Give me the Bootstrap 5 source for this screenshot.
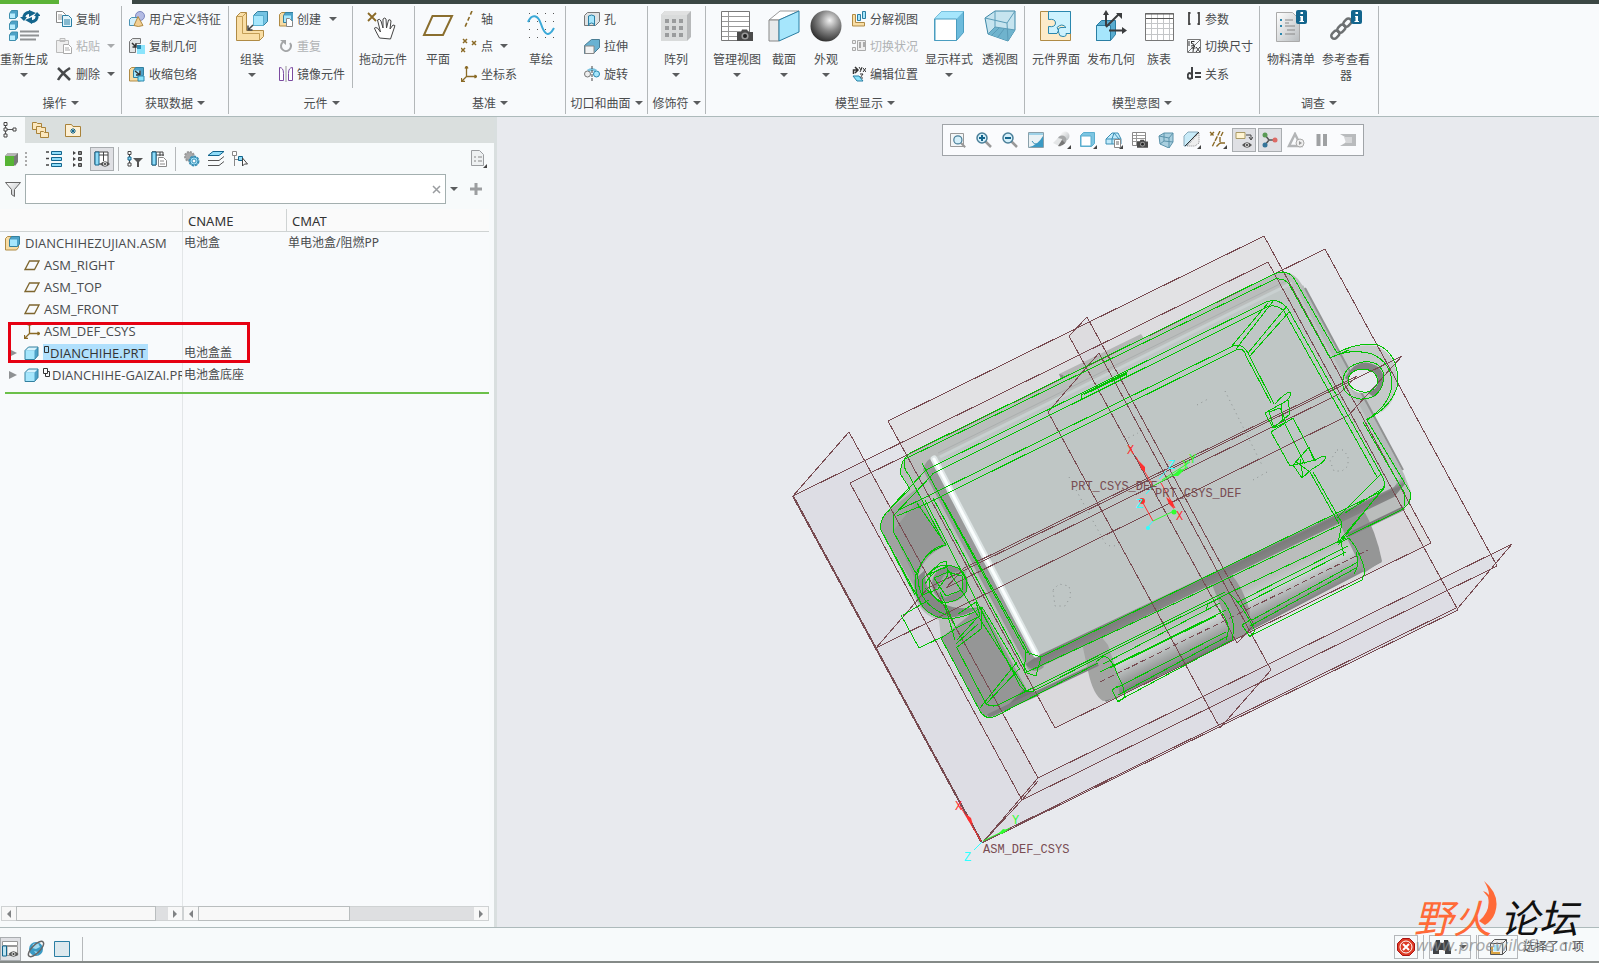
<!DOCTYPE html>
<html lang="zh-CN">
<head>
<meta charset="utf-8">
<meta name="viewport" content="width=device-width, initial-scale=1">
<title>DIANCHIHEZUJIAN.ASM</title>
<link href="https://cdn.jsdelivr.net/npm/bootstrap@5.3.0/dist/css/bootstrap.min.css" rel="stylesheet">
<style>
body{font-family:"Noto Sans","Noto Sans CJK SC",sans-serif;font-size:12px;line-height:16px;color:#4a4c4e;background:#f8fafc}
button{border:0;background:none;padding:0;color:inherit;font:inherit;line-height:16px}
svg{display:block;flex:none}
.titlestrip{height:4px;background:#3b4744}
.strip-file{width:59px;background:#5cb338}
.strip-tab{width:73px;background:#f8fafc}
.ribbon{background:#f8fafc;border-bottom:1px solid #adbabb;height:113px;font-family:"Noto Sans CJK SC",sans-serif}
.rgroup{border-right:1px solid #b3b7b9;margin:2px 0;white-space:nowrap}
.rbody{height:82px}
.rlabel{height:26px;padding-top:4px;gap:4px}
.bigbtn{display:flex;flex-direction:column;align-items:center;padding-top:4px;justify-content:flex-start}
.bigbtn span{margin-top:9px}
.bigbtn .caret{margin-top:6px}
.bw-l{width:62px}.bw-m{width:48px}.bw-n{width:46px}.bw-s{width:32px}.bw-x{width:40px}.bw-h{width:56px}
.smallbtn{display:flex;align-items:center;gap:4px;height:28px}
.smallbtn:first-child{height:26px}
.smallbtn .caret{margin-left:3px}
.caret{display:block;border:4px solid transparent;border-top-color:#5a5c5e;border-bottom:0;width:0;height:0;flex:none}
.dim{color:#b0b3b5}.dim .caret{border-top-color:#a8aaac}
.innersep{width:1px;background:#b3b7b9;margin:0 7px}
.g1{width:122px}.g2{width:107px}.g3{width:186px}.g4{width:151px}.g5{width:82px}.g6{width:58px}.g7{width:319px}.g8{width:235px}.g9{width:119px}
.smallpad{padding-left:7px}.cutpad{padding-left:18px}
.sidepane{width:497px;border-right:3px solid #d9dfdf;background:#f7fafb}
.tabrow{height:26px;background:#dadfde}
.tabbtn{height:26px;display:flex;align-items:center;justify-content:center;width:32px}
.tabbtn.active{background:#f7fafb;width:25px;padding-right:5px}
.treetools{height:31px;padding:0 4px}
.grip{margin:0 15px 0 7px}
.pressed{background:#dfe0e4;border:1px solid #a9adb0}
.tb24{width:24px;height:24px;display:flex;align-items:center;justify-content:center;flex:none}
.vsep{width:1px;height:24px;background:#b5b8ba;flex:none}
.treetools .vsep{margin:0 4px}
.filterrow{height:30px;padding-left:5px}
.filterbox{height:30px;border:1px solid #a3afaf;background:#fff;border-radius:0;width:421px}
.filterbox input{border:0;outline:0;background:none;min-width:0}
.treewrap{background:linear-gradient(#e3e6e8,#e3e6e8) 182px 0/1px 100% no-repeat,#f8fafc;margin-top:5px;margin-right:5px}
.tree{table-layout:fixed;width:100%;border-collapse:separate;border-spacing:0}
.tree th{font-weight:400;color:#333;height:23px;background:#fafafa;border-bottom:1px solid #cfd3d3;font-size:13px;padding:2px 0 0 5px}
.tree th+th{border-left:1px solid #cfd3d3}
.tree td{height:22px;padding:0;white-space:nowrap;overflow:hidden}
.tree td+td{padding-left:2px}
.tree .cell{display:flex;align-items:center;gap:4px;height:22px;font-family:"Open Sans","Noto Sans",sans-serif;font-size:13px}
.lv1{padding-left:24px}.lv0{padding-left:5px}.lvp{padding-left:9px}
.expander{border:4px solid transparent;border-left:8px solid #8f9193;border-right:0;width:8px;height:8px;flex:none;margin-right:2px}
.picked{background:#b0e0fd;color:#333;height:18px;display:flex;align-items:center;padding:0 2px 0 1px;gap:1px}
.childname{margin-left:-2px}
.redbox{position:absolute;left:8px;top:113px;width:242px;height:41px;border:3px solid #e60012;pointer-events:none}
.insertline{height:2px;background:#6cc04a;margin:6px 0 0 5px}
.sbars{margin:0 5px 6px 1px}
.sbar{height:15px;background:#dedfe1;border:1px solid #cfd2d3;display:flex;justify-content:space-between}
.sbar-name{width:182px}
.sbar button{width:14px;display:flex;align-items:center;justify-content:center;background:#f8f8f8}
.sthumb{background:#f8f8f8;border:1px solid #b9bdbe;margin:-1px 0}
.scene{background:#e8eaee}
.viewbar{position:absolute;left:445px;top:7px;background:#fafbfd;border:1px solid #a0a4a8;padding:3px 2px}
.viewbar .tb24{margin:0 1px}
.statusbar{height:34px;border-top:1px solid #adbabb;background:#f7fafb}
.navbtn{width:21px}.webbtn{width:30px}.fullbtn{width:22px;margin-right:9px}
.bottomedge{height:2px;background:#858a88}
.statusright{padding:0 15px 2px 0;gap:5px}
.boxed{border:1px solid #b4b7ba;height:24px;width:24px;display:flex;align-items:center;justify-content:center;gap:8px}
.boxed-find{width:42px}.boxed-filter{width:40px;margin-left:-4px}
.mark-logo{position:absolute;right:21px;bottom:7px;text-align:right;pointer-events:none}
.mark-big{font:italic 400 39px/40px "Noto Sans CJK SC",sans-serif;color:#111}
.mark-big b{font-weight:400;color:#ff6a38;margin-right:8px}
.mark-url{font:italic 16px/20px "DejaVu Sans",sans-serif;color:#8c8f92;opacity:.75}
.mark-flame{position:absolute;left:65px;top:-15px}
.scene text{font:12px "Liberation Mono",monospace;fill:#784c52}
</style>
</head>
<body class="vh-100 d-flex flex-column overflow-hidden">
<svg width="0" height="0" class="position-absolute" aria-hidden="true">
<defs>
<linearGradient id="sil" x1="0" y1="0" x2="1" y2="1"><stop offset="0" stop-color="#fff"/><stop offset="1" stop-color="#b8bcbf"/></linearGradient>
<radialGradient id="ball" cx=".62" cy=".32" r=".7"><stop offset="0" stop-color="#f2f2f2"/><stop offset=".5" stop-color="#858585"/><stop offset="1" stop-color="#303030"/></radialGradient>
<symbol id="cube" viewBox="0 0 16 16"><path d="M2 5.500l3.500-3.500h9.500v8.500l-3.500 4H2z" fill="#4da2c8"/><path d="M2 5.500l3.500-3.500h9.500l-3.500 3.500z" fill="#d8f3fd"/><path d="M2 5.500h9.500v9H2z" fill="#a6e6fc"/><path d="M2 5.500l3.500-3.500h9.500v8.500l-3.500 4H2z" fill="none" stroke="#33809f"/></symbol>
<symbol id="asm" viewBox="0 0 16 16"><path d="M.5 3.500l2-2h11v11l-2 2.500H.5z" fill="#f7dca4" stroke="#b08b45"/><path d="M4.500 4.500l2-3h8v7.500l-2 2.500h-8z" fill="#4da2c8" stroke="#33809f"/><path d="M5 4.500h7V11H5z" fill="#a6e6fc"/></symbol>
<symbol id="datum" viewBox="0 0 16 16"><path d="M5.500 4h9.500L10.500 12.500H1z" fill="none" stroke="#7e662f" stroke-width="1.300"/></symbol>
<symbol id="csys" viewBox="0 0 16 16"><path d="M5.500 0v10.500H16M5.500 10.500L1 15M4 2.500L5.500 0 7 2.500M13.500 9l2.500 1.500L13.500 12M.5 12v3.500H4" fill="none" stroke="#8a6a26" stroke-width="1.300"/></symbol>
<symbol id="cam" viewBox="0 0 16 12"><path d="M0 3h4l1-2.500h5L11.500 3H16v9H0z" fill="#4b4b4b"/><circle cx="8" cy="7" r="3.600" fill="#999"/><circle cx="8" cy="7" r="2" fill="#222"/></symbol>
<symbol id="sheet" viewBox="0 0 32 32"><path d="M2.500 1.500h28v29h-28z" fill="#fff" stroke="#777"/><path d="M3 6.500h27M3 11.500h27M3 16.500h27M3 21.500h27M3 26.500h27M9.500 2v28" stroke="#999"/></symbol>
<symbol id="eye" viewBox="0 0 10 6"><path d="M0 3Q5-2.500 10 3 5 8.500 0 3z" fill="#555"/><circle cx="5" cy="3" r="2" fill="#ddd"/><circle cx="5" cy="3" r="1" fill="#333"/></symbol>
<symbol id="info" viewBox="0 0 11 14"><rect width="11" height="14" rx="2" fill="#13658d"/><path d="M4.500 2h2.500v2H4.500zM4 6h3v5h1v1H3.500v-1h1V7H4z" fill="#fff"/></symbol>
<symbol id="mag" viewBox="0 0 16 16"><path d="M9.500 9.500L15 15" stroke="#999" stroke-width="2.500"/><circle cx="6" cy="6" r="5" fill="#d6f0fa" stroke="#4a7f99" stroke-width="1.500"/></symbol>
</defs></svg>

<header>
<div class="titlestrip d-flex"><div class="strip-file"></div><div class="strip-tab"></div></div>
<div class="ribbon d-flex">
 <section class="rgroup g1"><div class="rbody d-flex">
  <button class="bigbtn bw-m"><svg width="32" height="32"><g fill="#4da2c8" stroke="#3f8fae"><path d="M1.500 3.500l2-3h6v6l-2 2h-6zM1.500 14l2-3h6v6l-2 2.500h-6zM1.500 25l2-3h6v6l-2 2.500h-6z"/></g><path d="M2 3.500h5V8H2zM2 14.500h5V19H2zM2 25.500h5V30H2z" fill="#b8ecfd"/><path d="M16 9q-1-6 6-7M29 5q1 6-6 7" fill="none" stroke="#13658d" stroke-width="3"/><path d="M21 0l7 3-7 4zM24 7v7l-7-4zM12 7h7l-3 4zM26 6h7l-4-4z" fill="#13658d"/><path d="M12 21.500h19M12 25.500h19M12 29.500h16" stroke="#8f9294" stroke-width="2"/></svg><span>重新生成</span><i class="caret"></i></button>
  <div class="ms-2">
   <button class="smallbtn"><svg width="16" height="16"><path d="M.5.500h6l3 3v8h-9z" fill="#fff" stroke="#888"/><path d="M2 4h4M2 6h4M2 8h4" stroke="#999"/><path d="M6.500 4.500h6l3 3v8h-9z" fill="#e2f5fc" stroke="#2a7ea3"/><path d="M8 9h6M8 11h6M8 13h6" stroke="#2a7ea3"/></svg>复制</button>
   <button class="smallbtn dim" disabled><svg width="16" height="16"><path d="M.5 2.500h12v12H.5zM4 .5h5v3H4z" fill="#eee" stroke="#bbb"/><path d="M7.500 6.500h5l3 3v6h-8z" fill="#fff" stroke="#aaa"/><path d="M9 10h4M9 12h5" stroke="#aaa"/></svg>粘贴<i class="caret"></i></button>
   <button class="smallbtn"><svg width="16" height="16"><path d="M2 2l12 12M14 2Q6 7 2 14" stroke="#484a4c" stroke-width="2.500" fill="none"/></svg>删除<i class="caret"></i></button>
  </div></div><div class="rlabel d-flex justify-content-center align-items-center">操作<i class="caret"></i></div></section>
 <section class="rgroup g2"><div class="rbody smallpad">
   <button class="smallbtn"><svg width="16" height="16"><circle cx="11" cy="5" r="4.500" fill="#b3bbe4" stroke="#7d88bf"/><path d="M.5 8.500l2-2h6v5l-2 3h-6z" fill="#d2effb" stroke="#4a92b3"/><path d="M9 5.500l5 9q-5 2-9 0z" fill="#f2cf92" stroke="#b08b45"/></svg>用户定义特征</button>
   <button class="smallbtn"><svg width="16" height="16"><path d="M.5 3.500l3-3h8v5h-5v9h-6z" fill="#e3e5e6" stroke="#777"/><path d="M3 5l4 4M7 5.500V9H3.500" fill="none" stroke="#333" stroke-width="1.500"/><path d="M8 7h8v9H8z" fill="#8be4fc"/><path d="M8 7h4v4H8z" fill="#2a87ae"/></svg>复制几何</button>
   <button class="smallbtn"><svg width="16" height="16"><use href="#asm"/><path d="M6 5l5 4M11 4.500V9H7" fill="none" stroke="#333" stroke-width="1.500"/><path d="M9 10h6v5H9z" fill="#8be4fc" stroke="#2a87ae"/></svg>收缩包络</button>
 </div><div class="rlabel d-flex justify-content-center align-items-center">获取数据<i class="caret"></i></div></section>
 <section class="rgroup g3"><div class="rbody d-flex">
  <button class="bigbtn bw-n"><svg width="32" height="32"><path d="M.5 6.500l4-4h6v18h17v6l-4 4h-23z" fill="#f9dea6" stroke="#b08b45"/><path d="M.5 6.500h6v17h17v7M6.500 6.500l4-4" fill="none" stroke="#c39d55"/><path d="M17.500 5.500l4-4h10v10l-4 4h-10z" fill="#74c2e2" stroke="#33809f"/><path d="M17.500 5.500h10v10h-10z" fill="#a6e6fc" stroke="#5ab0d0"/><path d="M17 15l-5 5M12 15.500V20h4.500" fill="none" stroke="#444" stroke-width="1.500"/></svg><span>组装</span><i class="caret"></i></button>
  <div class="ps-1">
   <button class="smallbtn"><svg width="14" height="16"><use href="#asm" width="16" height="16"/><path d="M7.500 7.500h3l3 3v5h-6z" fill="#fff" stroke="#888"/></svg>创建<i class="caret ms-1"></i></button>
   <button class="smallbtn dim" disabled><svg width="14" height="16"><path d="M4 4a5 5 0 1 0 7 1" fill="none" stroke="#a3a5a7" stroke-width="2"/><path d="M1 2h6v5z" fill="#a3a5a7"/></svg>重复</button>
   <button class="smallbtn"><svg width="14" height="16"><path d="M.5 1.500q4 0 4 6v7h-4zM13.500 1.500q-4 0-4 6v7h4z" fill="#fff" stroke="#7b4ba0"/><path d="M7 0v16" stroke="#999"/></svg>镜像元件</button>
  </div>
  <div class="innersep"></div>
  <button class="bigbtn bw-n"><svg width="32" height="32"><path d="M1 3l8 8M9 3l-8 8" stroke="#8a6a26" stroke-width="1.800"/><path d="M12.500 28q-5-9-5-10t3 0l3 4-3-12q2-2 3.500 1l2 7V9q2-2 3 0l.5 9 2-8q2-1 2.500 1l-1 8 3-4q3 0 1.500 2l-4 12z" fill="#fff" stroke="#444"/></svg><span>拖动元件</span></button>
 </div><div class="rlabel d-flex justify-content-center align-items-center">元件<i class="caret"></i></div></section>
 <section class="rgroup g4"><div class="rbody d-flex">
  <button class="bigbtn bw-n"><svg width="32" height="32"><path d="M10.500 6h19.500L21 25H2z" fill="none" stroke="#8a6e2e" stroke-width="2"/></svg><span>平面</span></button>
  <div>
   <button class="smallbtn"><svg width="16" height="16"><path d="M11 0L4 16" stroke="#8a6a26" stroke-width="1.600" stroke-dasharray="4 2.500"/></svg>轴</button>
   <button class="smallbtn"><svg width="16" height="16"><path d="M2 1l4 4M6 1L2 5M11 3l4 4M15 3l-4 4M0 10l4 4M4 10l-4 4" stroke="#8a6a26" stroke-width="1.500"/></svg>点<i class="caret"></i></button>
   <button class="smallbtn"><svg width="16" height="16"><use href="#csys"/></svg>坐标系</button>
  </div>
  <button class="bigbtn bw-m"><svg width="32" height="32"><path d="M4 3.500h26M4 11.500h26M4 19.500h26M4 27.500h26" stroke="#555" stroke-dasharray="1 7"/><path d="M3 12C7 3 13 5 16 14s7 15 13 4" fill="none" stroke="#3aa9d8" stroke-width="2"/></svg><span>草绘</span></button>
 </div><div class="rlabel d-flex justify-content-center align-items-center">基准<i class="caret"></i></div></section>
 <section class="rgroup g5"><div class="rbody cutpad">
   <button class="smallbtn"><svg width="16" height="16"><path d="M.5 4.500l3-3h12v9l-4 4H.5z" fill="#dfe2e3" stroke="#777"/><path d="M4.500 15V5q3-2 6 0v10q0-3-3-3t-3 3z" fill="#a6e6fc" stroke="#2a7ea3"/></svg>孔</button>
   <button class="smallbtn"><svg width="16" height="16"><path d="M.5 7.500l7-6h8v8l-6 6h-9z" fill="#69b2d2" stroke="#4a7d94"/><path d="M1 8h9v7.500H1z" fill="#f3f3f3" stroke="#888"/></svg>拉伸</button>
   <button class="smallbtn"><svg width="16" height="16"><path d="M4 5q4-3 8 0" fill="none" stroke="#7ac3e0" stroke-width="3"/><circle cx="3.500" cy="8" r="3" fill="#eee" stroke="#777"/><circle cx="12.500" cy="8" r="3" fill="#a6e6fc" stroke="#2a87ae"/><path d="M8 0v16" stroke="#444" stroke-dasharray="3 1"/></svg>旋转</button>
 </div><div class="rlabel d-flex justify-content-center align-items-center">切口和曲面<i class="caret"></i></div></section>
 <section class="rgroup g6"><div class="rbody d-flex">
  <button class="bigbtn bw-h"><svg width="32" height="32"><path d="M1 5l4-4h26v26l-4 4H1z" fill="#b7b9ba"/><path d="M1 5l4-4h26l-4 4z" fill="#e0e1e1"/><path d="M1 5h26v26H1z" fill="#d9dbdb"/><path d="M5 9h4v4H5zM12 9h4v4h-4zM19 9h4v4h-4zM5 16h4v4H5zM12 16h4v4h-4zM19 16h4v4h-4zM5 23h4v4H5zM12 23h4v4h-4zM19 23h4v4h-4z" fill="#9a9c9d"/></svg><span>阵列</span><i class="caret"></i></button>
 </div><div class="rlabel d-flex justify-content-center align-items-center">修饰符<i class="caret"></i></div></section>
 <section class="rgroup g7"><div class="rbody d-flex">
  <button class="bigbtn bw-l"><svg width="32" height="32"><use href="#sheet" x="-2" width="32" height="32"/><use href="#cam" x="16" y="19" width="16" height="12"/></svg><span>管理视图</span><i class="caret"></i></button>
  <button class="bigbtn bw-s"><svg width="32" height="32"><path d="M1 10L12 1h19L11 10z" fill="#fff" stroke="#999"/><path d="M1 10h10v21H1z" fill="#e8eaeb" stroke="#888"/><path d="M11 10L31 1v21L11 31z" fill="#a6e6fc" stroke="#2a7ea3"/></svg><span>截面</span><i class="caret"></i></button>
  <button class="bigbtn bw-m ps-1"><svg width="32" height="32"><circle cx="16" cy="16" r="15.500" fill="url(#ball)"/></svg><span>外观</span><i class="caret"></i></button>
  <div class="ms-1">
   <button class="smallbtn"><svg width="14" height="16"><path d="M.5 3.500h3v8h9v3.500H.5z" fill="#f9dea6" stroke="#b08b45"/><path d="M5.500 3.500h3v6h-3zM10.500.500h3v7h-3z" fill="#a6e6fc" stroke="#2a7ea3"/></svg>分解视图</button>
   <button class="smallbtn dim" disabled><svg width="14" height="16"><path d="M.5 2.500h3v3h-3zM.5 9.500h3v3h-3zM5.500 2.500h8v10h-8z" fill="#eee" stroke="#aaa"/><path d="M7 4h2v6H7zM11 4h2v5h-2z" fill="#aaa"/></svg>切换状况</button>
   <button class="smallbtn"><svg width="14" height="16"><path d="M1.500 8V4h4M3 1l3 3-3 3" fill="none" stroke="#333" stroke-width="1.500"/><path d="M7 1l2 3 1-3M9 4l-1 2M11 2l3 4M14 2l-3 4M8 8h3l-3 4h3" fill="none" stroke="#333"/><path d="M1 10h6l4 5H5z" fill="#8be4fc" stroke="#2a7ea3"/></svg>编辑位置</button>
  </div>
  <button class="bigbtn bw-l"><svg width="32" height="32"><path d="M1.500 9l7-7.500h22v21l-7 8h-22z" fill="#6dbbdc" stroke="#4a9dc0"/><path d="M1.500 9l7-7.500h22l-7 7.500z" fill="#a6e6fc"/><path d="M2 9h21.500v21.500H2z" fill="#fff" stroke="#4a9dc0"/></svg><span>显示样式</span><i class="caret"></i></button>
  <button class="bigbtn bw-x"><svg width="32" height="32"><path d="M1 8L11 1h20v19L24 31 4 24z" fill="#c6e4ef" stroke="#3c87a6"/><path d="M4 24l7-7 20 3-7 11z" fill="#6fb3cd"/><path d="M1 8l22 5 1 18M23 13l8-12M11 1v16l-7 7M11 17l20 3M8 25l7-7M14 27l6-8" fill="none" stroke="#5b9cb8"/></svg><span>透视图</span></button>
 </div><div class="rlabel d-flex justify-content-center align-items-center">模型显示<i class="caret"></i></div></section>
 <section class="rgroup g8"><div class="rbody d-flex">
  <button class="bigbtn bw-l"><svg width="32" height="32"><path d="M.5 1.500h30v29H.5z" fill="#fdebc9" stroke="#b08b45"/><path d="M8.500 1.500h22v22H26q1 3-3 3t-4-3q-2-6 2-6 5 0 5 0-4-5-9 0 3 3 0 6H8.500v-7q7 1 7-3.500t-7-3.500z" fill="#cdf2fe" stroke="#2a87ae"/></svg><span>元件界面</span></button>
  <button class="bigbtn bw-m"><svg width="32" height="32"><path d="M1.500 15.500l5-5h14v14l-5 6h-14z" fill="#58acd0" stroke="#2a7ea3"/><path d="M1.500 15.500h14v15h-14z" fill="#a6e6fc" stroke="#2a7ea3"/><path d="M11 16V3M11 17L24 4M14 20.500h14" stroke="#3b3d3f" stroke-width="2"/><path d="M8 5h6l-3-5zM21 3h6v6zM27 17v7l5-3.500z" fill="#3b3d3f"/></svg><span>发布几何</span></button>
  <button class="bigbtn bw-m"><svg width="32" height="32"><path d="M2.500 3.500h28v27h-28z" fill="#fff" stroke="#777"/><path d="M3 13.500h27M3 18.500h27M3 24.500h27M8.500 4v26M14.500 4v26M20.500 4v26M26.500 4v26" stroke="#c4c6c8"/><path d="M2 4h29M3 8.500h27" stroke="#555"/></svg><span>族表</span></button>
  <div class="ps-1">
   <button class="smallbtn"><svg width="14" height="16"><path d="M3.500 2H2v11h1.500M10.500 2H12v11h-1.500" fill="none" stroke="#444" stroke-width="1.800"/></svg>参数</button>
   <button class="smallbtn"><svg width="14" height="16"><path d="M.5 1.500h13v13H.5zM13 2L1 14" fill="none" stroke="#777"/><path d="M2 3v5M4 3.500h3.500M4.500 3.500v2q3 0 2.500 2L4 8M8 8q-2 0-2 6M4.500 10h4M9 9l4 5M13 9l-4 5" fill="none" stroke="#333"/></svg>切换尺寸</button>
   <button class="smallbtn"><svg width="14" height="16"><path d="M5 1v12M5 8.500q-3-3-4 0t1 4 3-1.500M8 7h6M8 11h6" fill="none" stroke="#3f4143" stroke-width="2"/></svg>关系</button>
  </div>
 </div><div class="rlabel d-flex justify-content-center align-items-center">模型意图<i class="caret"></i></div></section>
 <section class="rgroup g9"><div class="rbody d-flex">
  <button class="bigbtn bw-l"><svg width="32" height="32"><path d="M1.500 2.500h16l7 7v22h-23z" fill="url(#sil)" stroke="#aaa"/><path d="M5 10h2M5 16h2M5 24h2" stroke="#2a87ae" stroke-width="2"/><path d="M10 10h8M10 13h4M10 16h10M12 20h8M10 24h10" stroke="#888"/><use href="#info" x="21" width="11" height="14"/></svg><span>物料清单</span></button>
  <button class="bigbtn bw-m text-wrap"><svg width="32" height="32"><g fill="none" stroke="#6d7072" stroke-width="2.500"><rect x="1" y="22" width="9" height="6" rx="3" transform="rotate(-45 5 25)"/><rect x="7" y="16" width="9" height="6" rx="3" transform="rotate(-45 11 19)"/><rect x="13" y="10" width="9" height="6" rx="3" transform="rotate(-45 17 13)"/></g><use href="#info" x="21" width="11" height="14"/></svg><span>参考查看器</span></button>
 </div><div class="rlabel d-flex justify-content-center align-items-center">调查<i class="caret"></i></div></section>
</div>
</header>

<main class="flex-grow-1 d-flex overflow-hidden">
<aside class="sidepane d-flex flex-column flex-shrink-0">
 <nav class="tabrow d-flex">
  <button class="tabbtn active" aria-label="模型树"><svg width="14" height="16"><path d="M2.500 2v12M3 7.500h8" stroke="#555"/><path d="M1 .5h3v3H1zM1 6h3v3H1zM1 12h3v3H1zM10 6h3v3h-3z" fill="#fff" stroke="#444"/></svg></button>
  <button class="tabbtn" aria-label="文件夹浏览器"><svg width="18" height="18"><g fill="#fbe7be" stroke="#a98239"><path d="M.5 1.500h4l1 1h4v6h-9z"/><path d="M4.500 5.500h4l1 1h4v6h-9z"/><path d="M8.500 10.500h3l1 1h4v5h-8z"/></g></svg></button>
  <button class="tabbtn" aria-label="收藏夹"><svg width="16" height="16"><path d="M.5 2.500h6l1.500 2h7.500v10H.5z" fill="#fdf0d4" stroke="#a98239"/><path d="M8 6v6M5 9h6M6 7l4 4M10 7l-4 4" stroke="#13658d"/></svg></button>
 </nav>
 <div class="treetools d-flex align-items-center">
  <svg width="14" height="14"><path d="M1 4l3-3h10v9l-3 4z" fill="#777"/><path d="M1 4l3-3h10l-3 3z" fill="#b5b5b5"/><path d="M1 4h9v10H1z" fill="#57b435"/></svg>
  <svg width="2" height="14" class="grip"><path d="M1 0v14" stroke="#aaa" stroke-width="2" stroke-dasharray="2 2"/></svg>
  <button class="tb24" aria-label="全部展开"><svg width="16" height="16"><path d="M0 1h3M0 7.500h3M0 14h3" stroke="#444" stroke-width="1.500"/><path d="M5.500.5h10v3h-10zM5.500 6.500h10v3h-10zM5.500 12.500h10v3h-10z" fill="#8fdcf8" stroke="#13658d"/></svg></button>
  <button class="tb24" aria-label="全部折叠"><svg width="12" height="16"><path d="M1 0l3 2-3 2zM1 6l3 2-3 2zM1 12l3 2-3 2z" fill="#444"/><path d="M6.500.5h3v3h-3zM6.500 6.500h3v3h-3zM6.500 12.500h3v3h-3z" fill="#888" stroke="#444"/></svg></button>
  <button class="tb24 pressed" aria-label="树列"><svg width="16" height="16"><path d="M1 1h13v12H1z" fill="#fff" stroke="#444"/><path d="M1 1h4v13H1z" fill="#8fdcf8" stroke="#13658d"/><path d="M5 4h9M9.500 1v9" stroke="#444"/><use href="#eye" x="6" y="10" width="10" height="6"/></svg></button>
  <i class="vsep"></i>
  <button class="tb24" aria-label="树过滤器"><svg width="16" height="16"><path d="M2.500 2v12" stroke="#444"/><path d="M1 .5h3v3H1zM1 12h3v3H1z" fill="#fff" stroke="#444"/><path d="M1 6h3v3H1z" fill="#8fdcf8" stroke="#13658d"/><path d="M6 7h10l-4 4v5h-2v-5z" fill="#555"/></svg></button>
  <button class="tb24" aria-label="树设置"><svg width="16" height="16"><path d="M1 1h11v4M1 1h4v13H1zM5 4h8M9 1v4" fill="none" stroke="#444"/><path d="M1 1h4v13H1z" fill="#8fdcf8" stroke="#13658d"/><path d="M7.500 6.500h5l3 3v6h-8z" fill="#fff" stroke="#888"/><path d="M9 10h4M9 13h5" stroke="#888"/></svg></button>
  <i class="vsep"></i>
  <button class="tb24" aria-label="设置"><svg width="16" height="16"><circle cx="5.500" cy="5.500" r="4.500" fill="#aaa" stroke="#999" stroke-width="2" stroke-dasharray="2 1"/><circle cx="10" cy="10" r="4" fill="#e8f7fd" stroke="#3a8fb5" stroke-width="3" stroke-dasharray="2.200 .8"/><circle cx="10" cy="10" r="4" fill="#a6e6fc" stroke="#3a8fb5"/><circle cx="10" cy="10" r="2" fill="#fff" stroke="#3a8fb5"/></svg></button>
  <button class="tb24" aria-label="层"><svg width="18" height="16"><path d="M6 .5h11l-5 4H1z" fill="#8fdcf8" stroke="#13658d"/><path d="M1 9.500h11l5-4M1 14.500h11l5-4" fill="none" stroke="#555"/></svg></button>
  <button class="tb24" aria-label="选择"><svg width="16" height="16"><path d="M2.500 4v11M3 8.500h4" stroke="#888"/><path d="M.5.500h4v4h-4z" fill="#fff" stroke="#888"/><path d="M6.500 5.500h4v4h-4z" fill="#8fdcf8" stroke="#13658d"/><path d="M10.500 7v8l2-2h3z" fill="#fff" stroke="#444"/></svg></button>
  <button class="tb24 ms-auto" aria-label="显示"><svg width="17" height="18"><path d="M1.500.500h8l4 4v11h-12z" fill="#eef1f2" stroke="#9a9da0"/><path d="M4 7h2M4 11h2M8 7h4M8 11h4" stroke="#888"/><path d="M17 14v4h-4z" fill="#444"/></svg></button>
 </div>
 <div class="filterrow d-flex align-items-center">
  <svg width="16" height="16" class="me-1"><path d="M.5 1.500h15l-6 7v7l-3-2v-5z" fill="url(#sil)" stroke="#666"/></svg>
  <div class="filterbox d-flex align-items-center pe-1"><input type="text" class="flex-grow-1" aria-label="过滤器"><button aria-label="清除"><svg width="9" height="9"><path d="M1 1l7 7M8 1L1 8" stroke="#9a9da0" stroke-width="1.500"/></svg></button></div>
  <button aria-label="过滤选项" class="ms-1"><i class="caret"></i></button>
  <button aria-label="添加" class="ms-2 ps-1"><svg width="12" height="12"><path d="M6 0v12M0 6h12" stroke="#9c9ea0" stroke-width="3"/></svg></button>
 </div>
 <div class="treewrap flex-grow-1 position-relative">
  <table class="tree">
   <colgroup><col style="width:182px"><col style="width:104px"><col></colgroup>
   <thead><tr><th></th><th>CNAME</th><th>CMAT</th></tr></thead>
   <tbody>
    <tr><td><div class="cell lv0"><svg width="16" height="16"><use href="#asm"/></svg>DIANCHIHEZUJIAN.ASM</div></td><td>电池盒</td><td>单电池盒/阻燃PP</td></tr>
    <tr><td><div class="cell lv1"><svg width="16" height="16"><use href="#datum"/></svg>ASM_RIGHT</div></td><td></td><td></td></tr>
    <tr><td><div class="cell lv1"><svg width="16" height="16"><use href="#datum"/></svg>ASM_TOP</div></td><td></td><td></td></tr>
    <tr><td><div class="cell lv1"><svg width="16" height="16"><use href="#datum"/></svg>ASM_FRONT</div></td><td></td><td></td></tr>
    <tr><td><div class="cell lv1"><svg width="16" height="16"><use href="#csys"/></svg>ASM_DEF_CSYS</div></td><td></td><td></td></tr>
    <tr><td><div class="cell lvp"><i class="expander"></i><svg width="16" height="16"><use href="#cube"/></svg><span class="picked"><svg width="5" height="14"><path d="M.5.5h4v6h-4z" fill="none" stroke="#333"/></svg>DIANCHIHE.PRT</span></div></td><td>电池盒盖</td><td></td></tr>
    <tr><td><div class="cell lvp"><i class="expander"></i><svg width="16" height="16"><use href="#cube"/></svg><svg width="7" height="14"><path d="M.5.500h4v5h-4zM4.500 3.500h2v5h-4v-3" fill="none" stroke="#333"/></svg><span class="childname">DIANCHIHE-GAIZAI.PRT</span></div></td><td>电池盒底座</td><td></td></tr>
   </tbody>
  </table>
  <div class="insertline"></div>
  <div class="redbox"></div>
 </div>
 <div class="sbars d-flex">
  <div class="sbar sbar-name"><button aria-label="左"><svg width="6" height="8"><path d="M5 0v8L1 4z" fill="#808284"/></svg></button><div class="sthumb flex-grow-1 me-2"></div><button class="ms-1" aria-label="右"><svg width="6" height="8"><path d="M1 0v8l4-4z" fill="#808284"/></svg></button></div>
  <div class="sbar flex-grow-1"><button aria-label="左"><svg width="6" height="8"><path d="M5 0v8L1 4z" fill="#808284"/></svg></button><div class="sthumb w-50 me-auto"></div><button aria-label="右"><svg width="6" height="8"><path d="M1 0v8l4-4z" fill="#808284"/></svg></button></div>
 </div>
</aside>

<section class="scene flex-grow-1 position-relative overflow-hidden">
<svg class="w-100 h-100" viewBox="497 117 1102 810" preserveAspectRatio="xMinYMin meet" fill="none">
 <defs>
  <linearGradient id="cyl" gradientUnits="userSpaceOnUse" x1="1150" y1="632" x2="1174" y2="681"><stop offset="0" stop-color="#b5b8b7"/><stop offset=".3" stop-color="#ccd1d1"/><stop offset=".55" stop-color="#a3a6a6"/><stop offset=".85" stop-color="#737373"/><stop offset="1" stop-color="#858585"/></linearGradient>
  <linearGradient id="rim" gradientUnits="userSpaceOnUse" x1="1210" y1="566" x2="1218" y2="583"><stop offset="0" stop-color="#bcc2c2"/><stop offset=".5" stop-color="#7c7c7c"/><stop offset="1" stop-color="#888"/></linearGradient>
 </defs>
 <!-- datum plane tints -->
 <g fill="#a08ea4" fill-opacity=".07">
  <path d="M793 496L1268 262 1458 610 982 843z"/><path d="M850 483L1325 249 1497 566 1022 800z" fill-opacity=".04"/>
  <path d="M793 496L849 432 1037 778 982 843z"/><path d="M982 843L1037 778 1512 544 1458 610z"/>
  <path d="M888 421L1264 236 1431 543 1055 728z" fill="#a08870" fill-opacity=".08"/>
  <path d="M1048 412L1099 353 1271 670 1220 728zM1069 336L1087 317 1254 625 1237 643z"/>
 </g>
 <!-- shaded parts -->
 <path d="M1059 374L1141 334 1150 347 1067 390z" fill="#b5b6b6"/><path d="M1059 374l4 1 5 12-2 3z" fill="#8c8c8c"/>
 <path d="M1335 354q20-11 41-8 22 8 21 38-2 18-14 27l-17 8z" fill="#c5c9c9"/>
 <path d="M910 453L1274 274q14-6 24 5l7 10 99 185 7 18q1 12-12 19L1000 713q-14 8-20-2L941 638l-2-18q-16-4-23-20L881 530q-2-10 7-19l22-22-9-14q-2-12 9-22z" fill="#babdbc"/>
 <path d="M1092 666L1340 540 1352 526 1382 562 1244 634 1234 640 1106 702q-10-10-14-36z" fill="url(#cyl)"/>
 <path d="M1082 643l18-8 8 10 8 24 4 28-17 4q-10-6-15-30z" fill="#a3a4a3"/>
 <path d="M1338 520l24-13q14 24 20 54l-18 12z" fill="#959696"/>
 <path d="M1211 582l18-10q14 14 21 40l-2 22-14 6z" fill="#979897"/>
 <path d="M1303 285L1404 475q3 10-10 16l-10 4-93-188z" fill="#b5baba"/><path d="M1305 288L1403 470" stroke="#8f9191" stroke-width="2"/>
 <path d="M881 530q-2-10 7-19l28-22 31 56q-24 10-29 28-3 10 0 20z" fill="#a1a2a2"/>
 <path d="M893 531l24-30 30 44q-22 9-28 28l-3 8z" fill="#959696"/>
 <path d="M941 638l40-32 45 82-28 27q-12 5-18-4z" fill="#959696"/><path d="M1000 713L1024 689 1040 695z" fill="#777"/>
 <path d="M988 716L1098 664" stroke="#7f8080" stroke-width="4"/><path d="M1348 535l56-27" stroke="#7c7c7c" stroke-width="4"/>
 <path d="M914 580q0 34 30 38 20 0 36-11-24 4-38-4-18-10-17-33z" fill="#858686"/>
 <circle cx="950" cy="584" r="18" fill="#8a8b8b"/><path d="M935 590l10-16 22-4-6 20-16 8z" fill="#a2a5a5"/>
 <path d="M935 457q-10 2-12 13l105 199q8 5 16-2l-10-12z" fill="#989999"/>
 <path d="M936 457L1288 283 1298 292 1399 478 1394 488 1040 655 1034 652 934 463z" fill="#bfc6c5"/>
 <path d="M940 457L1292 283" stroke="#c9d0d0" stroke-width="3"/><path d="M938 453L1290 279" stroke="#abafaf" stroke-width="1"/>
 <path d="M1037 656L1394 487 1404 474 1405 484 1394 497 1036 669q-8 0-10-5z" fill="url(#rim)"/>
 <path d="M934 459L1036 654" stroke="#dfe6e6" stroke-width="7" stroke-linecap="round"/><path d="M934 459L1036 654" stroke="#fafefe" stroke-width="3" stroke-linecap="round"/>
 <path d="M1345 378q10-18 24-15 14 3 15 17-2 10-10 17z" fill="#828383"/><ellipse cx="1363" cy="381" rx="15" ry="12" fill="#e6e8ec"/>

 <!-- datum plane outlines -->
 <g stroke="#784c52" shape-rendering="crispEdges">
  <path d="M793 496L1268 262 1458 610 982 843zM984 841L1456 608"/><path d="M793 496L982 843" stroke-width="2"/>
  <path d="M850 483L1325 249 1497 566 1022 800z"/>
  <path d="M793 496L849 432 1038 778 983 842M1038 778L1512 544 1458 608M1038 781L1022 800 985 840"/>
  <path d="M888 421L1264 236 1431 543 1055 728z"/>
  <path d="M1048 412L1099 353 1271 670 1220 728zM1069 336L1087 317 1254 625 1237 643z"/>
  <path d="M876 648L928 588 1402 356 1349 415zM964 568L1357 376 1339 394 946 588z"/>
  <path d="M1100 682L1368 550" stroke-dasharray="6 3"/>
 </g>
 <g stroke="#8b9090" stroke-dasharray="1 4"><path d="M1197 405l11-6M1225 391l38 76M1253 480l14-8M1124 440l14-7M1069 477l36 66q6 6 16 0M1337 450l6 0 5 6 0 10-6 5-8 0-4-10zM1053 590l6-6 10 2 2 10-6 10-10 0z"/></g>

 <!-- selected part edges -->
 <g stroke="#00c400" shape-rendering="crispEdges">
  <path d="M910 453L1274 274q14-6 21 6L1337 353M905 459L1275 279q9-1 14 5L1330 358 1349 350M910 453q-11 9-9 22l9 14-22 22q-9 9-7 19L915 595M905 459q-3 8 4 16l33 64"/>
  <path d="M926 470L1262 304q15-9 26 5L1381 474q8 14-3 19L1041 657 1026 652 922 463M932 474L1263 309q12-7 21 2L1377 477M926 470L893 505 888 512M933 474L893 516 893 531"/>
  <path d="M926 497L1231 347q11-6 18 8L1274 404M928 503L1236 350q8-3 10 6L1271 403M926 497L899 510M928 503L897 516M1313 472L1342 523 1338 543M1310 472L1339 524"/>
  <path d="M1231 347L1268 303M1236 349L1274 300M1248 353L1287 306M1249 357L1290 311"/>
  <path d="M1265 413l23-13 2 14-17 14zM1275 404q10-12 16-12 0 6-8 11M1269 412l11-4 6 14-12 6zM1281 404l2 17M1271 432l22-14 22 42-25 6zM1283 420l22 44M1293 465l16-18 5 14q10-7 12-4-2 6-14 12l-10 9zM1296 462l14 10M1300 459l3 18"/>
  <path d="M1337 353q20-11 41-8 20 8 20 38-4 22-31 37M1332 357q20-9 40-3 20 9 20 30-2 22-26 36M1343 386q-2-20 20-24 18-2 21 14-2 24-24 23-15-3-17-13zM1348 382q0-12 15-13 14 1 15 13-5 12-15 10-12-2-15-10z"/>
  <path d="M1367 420L1410 492q3 12-11 19L1346 537M1363 422L1405 494 1404 506M1381 474L1337 518M1385 487L1340 540M1385 487L1345 513M1380 492L1338 545"/>
  <path d="M881 530L923 607M893 531L918 577M917 503L946 545q-24 8-28 28-2 30 28 42M925 500L1020 686M933 498L1027 672M943 500L1030 655M946 545q-20 2-31 32 0 40 34 42 20-2 33-12L1020 670"/>
  <path d="M903 615L929 600M901 615L919 648 946 635M941 638L980 711q6 10 16 5L1098 663M941 638l14-9M957 648L986 704q8 4 14 0L1098 656M956 648L981 629 981 607M986 704L1020 668M980 708L1017 662M1020 686q8 10 17 3M1026 652L1024 672 1036 676 1041 657"/>
  <path d="M1027 672L1180 601 1342 524M1037 689L1100 657 1229 593 1346 538M1037 686L1225 592"/>
  <path d="M922 580l18-17 6-2 2 14-10 14-16 6zM934 578l14-6 14 4 0 14-16 6zM932 571q10-10 26-3 12 8 8 24-12 14-28 9-14-12-6-30zM925 588l20 18 10 34M940 592l16 36 24-12-4-14-18 12M956 644l22-20"/>
  <path d="M925 584q10-16 20-16M948 570L1026 690M928 575l22-10M957 640l20-22"/>
  <path d="M1096 662l8-6q8 2 14 20 8 14 6 22l-6 4-6-12 6-4M1100 672L1226 610M1110 668L1216 616M1118 701L1232 640 1234 628q-4-22-14-30l-12 6-2 6M1116 688L1226 632M1118 695L1228 636M1103 664L1220 603M1218 608q12 14 10 24l-2 8"/>
  <path d="M1229 593q14 12 26 38l-5 6-8-12 10-6M1250 636L1362 580 1365 572q-4-20-16-34l-8 4 3 14M1238 602L1348 546M1240 606L1346 552M1250 626L1356 568M1252 620L1358 562M1356 552q4 14-2 22"/>
  <path d="M1081 395L1127 372 1126 377 1081 400z"/><path d="M1084 394L1126 374" stroke-width="2"/>
 </g>

 <!-- coordinate systems -->
 <path d="M1136 457L1153 486M1161 483L1175 508M1143 503L1153 521M960 806L981 841" stroke="#ff3030"/>
 <path d="M1139 461l6 6 0 5-4-3zM1166 497l7 5 1 7-5-5zM966 814l5 4 2 7-5-5z" fill="#ff3030"/>
 <circle cx="1142" cy="501" r="3" fill="#ff3030"/>
 <path d="M1153 486L1188 467M1162 480L1190 462M1153 521L1174 511M983 841L1010 828" stroke="#30ff30"/>
 <path d="M1172 476l8-7 4 1-6 6zM998 834l5-5 5 1-6 4z" fill="#30ff30"/><circle cx="1174" cy="512" r="2.500" fill="#30ff30"/>
 <path d="M1153 486l-7 8M1159 479l7-8M1153 521l-5 6M982 842l-8 8" stroke="#30ffff"/><circle cx="1148" cy="528" r="2" fill="#30ffff"/>
 <text x="1071" y="490">PRT_CSYS_DEF</text><text x="1155" y="497">PRT_CSYS_DEF</text><text x="983" y="853">ASM_DEF_CSYS</text>
 <text x="1127" y="454" style="fill:#ff3030">X</text><text x="1176" y="520" style="fill:#ff3030">X</text><text x="955" y="810" style="fill:#ff3030">X</text>
 <text x="1182" y="469" style="fill:#30ff30">Y</text><text x="1189" y="463" style="fill:#30ff30">Y</text><text x="1012" y="824" style="fill:#30ff30">Y</text>
 <text x="1168" y="469" style="fill:#30ffff">Z</text><text x="1136" y="508" style="fill:#30ffff">Z</text><text x="964" y="861" style="fill:#30ffff">Z</text>
</svg>
<div class="viewbar d-flex" role="toolbar" aria-label="图形工具栏">
 <button class="tb24" aria-label="重新调整"><svg width="16" height="16"><path d="M.5 1.500h13v13H.5z" fill="#f4f6f7" stroke="#999"/><use href="#mag" x="3" y="3" width="13" height="13"/></svg></button>
 <button class="tb24" aria-label="放大"><svg width="16" height="16"><use href="#mag"/><path d="M3 6h6M6 3v6" stroke="#13658d" stroke-width="2"/></svg></button>
 <button class="tb24" aria-label="缩小"><svg width="16" height="16"><use href="#mag"/><path d="M3 6h6" stroke="#13658d" stroke-width="2"/></svg></button>
 <button class="tb24" aria-label="重画"><svg width="16" height="16"><path d="M.5.500h15v15H.5z" fill="#eaf2f5" stroke="#8aa0aa"/><path d="M1 1h14v2H1z" fill="#9ed2e8"/><path d="M1 15q9-2 14-11v11z" fill="#3a9ac4"/><path d="M4 9q2 4 5 3" stroke="#3a8fb5" fill="none"/></svg></button>
 <button class="tb24" aria-label="渲染"><svg width="18" height="18"><circle cx="12" cy="5" r="4.500" fill="url(#sil)"/><circle cx="9" cy="9" r="4.500" fill="#a5a7a8"/><path d="M0 12l5-5 4 1-1 8z" fill="#e4e6e7"/><path d="M5 15l4-6 3 3q-3 4-7 3z" fill="#777"/><path d="M18 14v4h-4z" fill="#444"/></svg></button>
 <button class="tb24" aria-label="显示样式"><svg width="18" height="18"><path d="M1.500 4.500l3-3h11v11l-3 3h-11z" fill="#7cc5e2" stroke="#5aaecf"/><path d="M2 5h10v10H2z" fill="#fff" stroke="#5aaecf"/><path d="M18 14v4h-4z" fill="#444"/></svg></button>
 <button class="tb24" aria-label="已保存方向"><svg width="18" height="18"><path d="M1 8l6-6h6l3 6v5H1z" fill="#c2eafa" stroke="#3a8fb5"/><path d="M1 8h15M9 2L7 8v5M9 2l5 6" stroke="#3a8fb5" fill="none"/><path d="M9.500 8.500h6v8h-6z" fill="#fff" stroke="#888"/><path d="M11 11h3M11 13h3" stroke="#666"/><path d="M18 14v4h-4z" fill="#444"/></svg></button>
 <button class="tb24" aria-label="视图管理器"><svg width="16" height="16"><path d="M.5.500h13v13H.5z" fill="#fff" stroke="#888"/><path d="M1 3.500h12M1 6.500h12M1 9.500h12M4.500 1v12" stroke="#999"/><use href="#cam" x="5" y="7" width="11" height="9"/></svg></button>
 <button class="tb24" aria-label="透视图"><svg width="16" height="16"><path d="M1 4l5-3h9v9l-4 6-9-4z" fill="#a9cfdf" stroke="#5b93ab"/><path d="M1 4l10 2v10M11 6l4-5M6 1v8l-4 3M6 9l9 1" fill="none" stroke="#5b93ab"/></svg></button>
 <button class="tb24" aria-label="截面"><svg width="18" height="18"><path d="M1 5l4-4h10L3 15H1z" fill="#c9ebf8" stroke="#8ab"/><path d="M4 15L16 2v10l-4 3z" fill="#eee" stroke="#888" stroke-dasharray="1 1"/><path d="M2 15L16 1" stroke="#333"/><path d="M18 14v4h-4z" fill="#444"/></svg></button>
 <button class="tb24" aria-label="基准显示过滤器"><svg width="18" height="18"><path d="M1 1l4 4M5 1L1 5M11 0L3 16M11 6v6h6M11 12l-4 4M14 1l-2 4" stroke="#8a6a26" stroke-width="1.400" fill="none" stroke-dasharray="5 1"/><path d="M18 14v4h-4z" fill="#444"/></svg></button>
 <button class="tb24 pressed" aria-label="注释显示"><svg width="18" height="16"><path d="M1 .5h9v6H1z" fill="#fff4d2" stroke="#aa9a66"/><path d="M11 3h5v4M14 5l2 3 2-3" stroke="#444" fill="none"/><use href="#eye" x="7" y="10" width="10" height="6"/></svg></button>
 <button class="tb24 pressed" aria-label="旋转中心"><svg width="16" height="16"><path d="M7 8h6M7 8L3 3M7 8l-4 5" stroke="#555" stroke-width="1.500"/><circle cx="3" cy="3" r="2.500" fill="#5a9a55"/><circle cx="13" cy="8" r="2.500" fill="#dd6a64"/><circle cx="3" cy="13" r="2.500" fill="#36759a"/></svg></button>
 <button class="tb24" aria-label="仿真" disabled><svg width="18" height="16"><path d="M8 2l6 12H2z" fill="none" stroke="#b3b5b7" stroke-width="2.500"/><circle cx="13" cy="11" r="4" fill="#eee" stroke="#aaa"/><path d="M12 9l3 2-3 2z" fill="#999"/></svg></button>
 <button class="tb24" aria-label="暂停" disabled><svg width="12" height="12"><path d="M2.500 0v12M9 0v12" stroke="#9fa1a3" stroke-width="4"/></svg></button>
 <button class="tb24" aria-label="恢复" disabled><svg width="16" height="12"><path d="M0 0h16v12H0l5-3q4-3 0-6z" fill="#b9bbbd"/><path d="M4 3h8v6H6" fill="#d5d6d8"/></svg></button>
</div>
</section>
</main>

<footer class="position-relative">
<div class="statusbar d-flex align-items-end">
 <button class="tb24 pressed navbtn" aria-label="导航器"><svg width="17" height="17"><path d="M.5.500h15v4H.5z" fill="#fff" stroke="#999"/><path d="M5 5.500h10.500v9H5z" fill="#f5f5f5" stroke="#999"/><path d="M.5 5h4v10h-4z" fill="#bfe3f0" stroke="#13658d"/><use href="#eye" x="6" y="10" width="11" height="6"/></svg></button>
 <button class="tb24 webbtn" aria-label="浏览器"><svg width="18" height="18"><circle cx="9" cy="9" r="7" fill="#3a9ac4"/><path d="M6 4l5-1 2 4-4 2-4-1zM7 11l4 1-1 3z" fill="#9fdaf0"/><ellipse cx="9" cy="9" rx="10" ry="4" transform="rotate(-45 9 9)" fill="none" stroke="#666" stroke-width="1.500"/></svg></button>
 <button class="tb24 fullbtn" aria-label="全屏"><svg width="16" height="16"><path d="M.5.500h15v15H.5z" fill="#dde9ee" stroke="#2a7ea3"/></svg></button>
 <i class="vsep"></i>
 <div class="ms-auto d-flex align-items-center statusright">
  <button class="boxed" aria-label="停止"><svg width="18" height="18"><path d="M5.500.500h7l5 5v7l-5 5h-7l-5-5v-7z" fill="#dd3b25" stroke="#a11"/><circle cx="9" cy="9" r="6" fill="none" stroke="#fff"/><path d="M6 6l6 6M12 6l-6 6" stroke="#fff" stroke-width="2"/></svg></button>
  <i class="vsep"></i>
  <button class="boxed boxed-find" aria-label="查找"><svg width="18" height="16"><path d="M3 1h4v3h4V1h4l3 9v5h-6v-4H6v4H0v-5z" fill="#3f4245"/></svg><i class="caret"></i></button>
  <i class="vsep"></i>
  <button class="boxed boxed-filter" aria-label="选择过滤器"><svg width="18" height="18"><path d="M1.500 5.500l4-4h12v11l-4 4h-12z" fill="#eee" stroke="#555"/><path d="M1.500 5.500h12v11M13.500 5.500l4-4" fill="none" stroke="#555"/><path d="M5 7h5v6H5z" fill="#a6e6fc"/><path d="M3 9v6h8" fill="none" stroke="#d9a441" stroke-width="2"/></svg></button>
  <span>选择了 1 项</span>
 </div>
</div>
<div class="bottomedge"></div>
<div class="mark-logo"><div class="mark-big"><b>野火</b>论坛</div><svg class="mark-flame" width="18" height="44"><path d="M5 0Q22 14 16 32q-3 8-10 12l-6-4q12-10 9-24l-5-6q4 1 6 4Q10 8 5 0z" fill="#ff6a38"/></svg><div class="mark-url">www.proewildfire.cn</div></div>
</footer>
<script src="https://cdn.jsdelivr.net/npm/bootstrap@5.3.0/dist/js/bootstrap.bundle.min.js"></script>
</body>
</html>
